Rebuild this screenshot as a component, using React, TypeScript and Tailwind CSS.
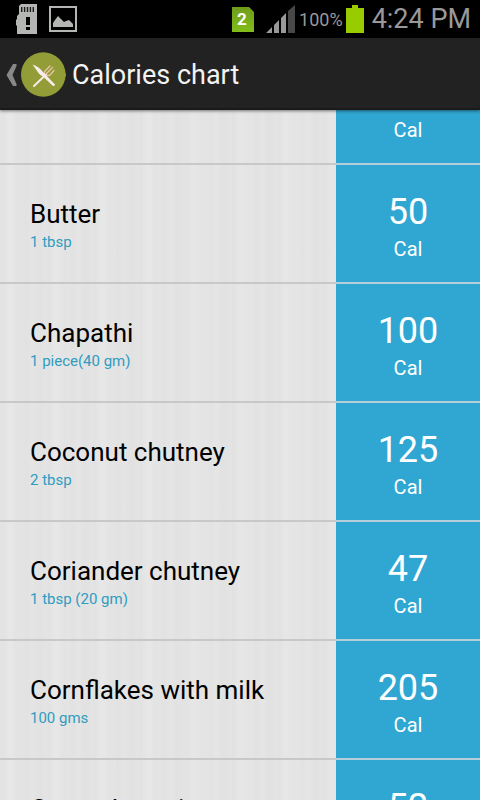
const foods = [
  { name: "Butter", portion: "1 tbsp", calories: 50 },
  { name: "Chapathi", portion: "1 piece(40 gm)", calories: 100 },
  { name: "Coconut chutney", portion: "2 tbsp", calories: 125 },
  { name: "Coriander chutney", portion: "1 tbsp (20 gm)", calories: 47 },
  { name: "Cornflakes with milk", portion: "100 gms", calories: 205 },
  { name: "Cucumber raita", portion: "", calories: 52 },
];

function StatusBar() {
  return (
    <div className="flex h-[38px] shrink-0 items-center bg-black pr-[9px] pl-4 text-[#999]">
      <svg className="h-[30px] w-[22px]" viewBox="0 0 22 30" aria-hidden="true">
        <path fill="#b4b6b4" d="M5 0H21V30H1V22L0 21V16L1 15V12L3 10V2Z" />
        <path stroke="#1c1c1c" strokeWidth="1.4" d="M5.700 3V8M8.600 3V8M11.500 3V8M14.400 3V8M17.300 3V8" />
        <path fill="#000" d="M10 13h4v8h-4zM10 23h4v3h-4z" />
      </svg>
      <svg className="ml-[11px] h-[26px] w-7" viewBox="0 0 28 26" aria-hidden="true">
        <rect x="1" y="1" width="26" height="24" fill="none" stroke="#b4b6b4" strokeWidth="2" />
        <path fill="#b4b6b4" d="M4 21V17L6 14L9 10L12 13L15 16L17 15L20 14L24 18V21Z" />
      </svg>
      <div className="ml-auto flex items-center">
        <svg className="h-[26px] w-[22px]" viewBox="0 0 22 26" aria-hidden="true">
          <defs>
            <linearGradient id="sim" x1="0" y1="0" x2="0" y2="1">
              <stop offset="0" stopColor="#6f9c1c" />
              <stop offset="1" stopColor="#82bd1a" />
            </linearGradient>
          </defs>
          <path fill="url(#sim)" d="M0 1H17L22 6V26H0Z" />
          <text x="10" y="19" textAnchor="middle" fill="#fff" fontSize="17" fontWeight="700" fontFamily="Roboto, sans-serif">2</text>
        </svg>
        <svg className="ml-3 h-7 w-[29px]" viewBox="0 0 29 28" aria-hidden="true">
          <path fill="#999" d="M0 28L6 22V28ZM8 20L13 15V28H8ZM15 13L20 8V28H15Z" />
          <path fill="#484848" d="M22 6L29 0V28H22Z" />
        </svg>
        <span className="ml-1 pt-0.5 text-lg">100%</span>
        <svg className="ml-[3px] h-7 w-[18px]" viewBox="0 0 18 28" aria-hidden="true">
          <path fill="#99cc00" d="M6 0H12V3H18V28H0V3H6Z" />
        </svg>
        <span className="ml-2 text-[27px]">4:24 PM</span>
      </div>
    </div>
  );
}

function ActionBar() {
  return (
    <header className="relative flex h-[72px] shrink-0 items-center border-b-2 border-[#1a1a1a] bg-[#222] pl-1.5 shadow-[0_1px_3px_rgba(0,0,0,0.5)]">
      <button type="button" aria-label="Back" className="flex items-center pt-1">
        <svg className="h-[22px] w-[11px]" viewBox="0 0 11 22" aria-hidden="true">
          <path fill="#888" d="M7 0H10.500V2L6.500 11L10.500 20V22H7L0.500 11Z" />
        </svg>
        <svg className="ml-1 h-[46px] w-[46px]" viewBox="0 0 46 46" aria-hidden="true">
          <path fill="#e8ead8" d="M43 18Q46 22.500 43 27Z" />
          <circle cx="22.300" cy="22.500" r="22.300" fill="#929d38" />
          <path fill="none" stroke="#f7e9e4" strokeWidth="2" strokeLinecap="round" d="M13 34L25 22.500" />
          <path fill="none" stroke="#ecc6a8" strokeWidth="1.200" strokeLinecap="round" d="M23.500 21.500Q23 20 24.500 18.500L29 14M25.500 21.500L31.500 15.500M26 23.500Q28 24 29.500 22.500L33 18.500" />
          <path fill="#f9ecea" d="M11.500 12.500Q18 14.500 22 20L34 32.500Q33.500 34.500 32 34L22 24.500Q19 23.500 17.500 21Z" />
        </svg>
      </button>
      <h1 className="ml-[5px] pt-1 text-[27px] text-[#f3f3f3]">Calories chart</h1>
    </header>
  );
}

export default function App() {
  return (
    <div className="flex h-screen flex-col overflow-hidden bg-[#e4e4e4] font-[Roboto,sans-serif]">
      <StatusBar />
      <ActionBar />
      <main className="min-h-0 flex-1 overflow-hidden">
        <ul className="bg-[repeating-linear-gradient(90deg,transparent_0px,#dedede50_3px,transparent_6px,#ebebeb50_10px,transparent_13px,#dedede40_17px,transparent_23px),repeating-linear-gradient(90deg,transparent_0px,#ebebeb50_11px,transparent_20px,#dedede40_34px,transparent_47px)]">
          <li className="flex h-[55px]">
            <div className="w-[70%] border-b-2 border-[#c8c8c8]" />
            <div className="flex w-[30%] flex-col items-center border-b-2 border-[#b4cfda] bg-[#2fa7d2] pt-1 text-white">
              <span className="text-xl leading-8">Cal</span>
            </div>
          </li>
          {foods.map((food) => (
            <li key={food.name} className="flex h-[119px]">
              <div className="flex w-[70%] flex-col justify-center border-b-2 border-[#c8c8c8] pt-1 pl-[30px]">
                <h2 className="text-[26px] leading-8 text-black">{food.name}</h2>
                <p className="h-6 text-[15px] leading-6 text-[#2f9cc0]">{food.portion}</p>
              </div>
              <div className="flex w-[30%] flex-col items-center justify-center border-b-2 border-[#b4cfda] bg-[#2fa7d2] pt-2 text-white">
                <span className="text-4xl leading-[42px]">{food.calories}</span>
                <span className="text-xl leading-8">Cal</span>
              </div>
            </li>
          ))}
        </ul>
      </main>
    </div>
  );
}
